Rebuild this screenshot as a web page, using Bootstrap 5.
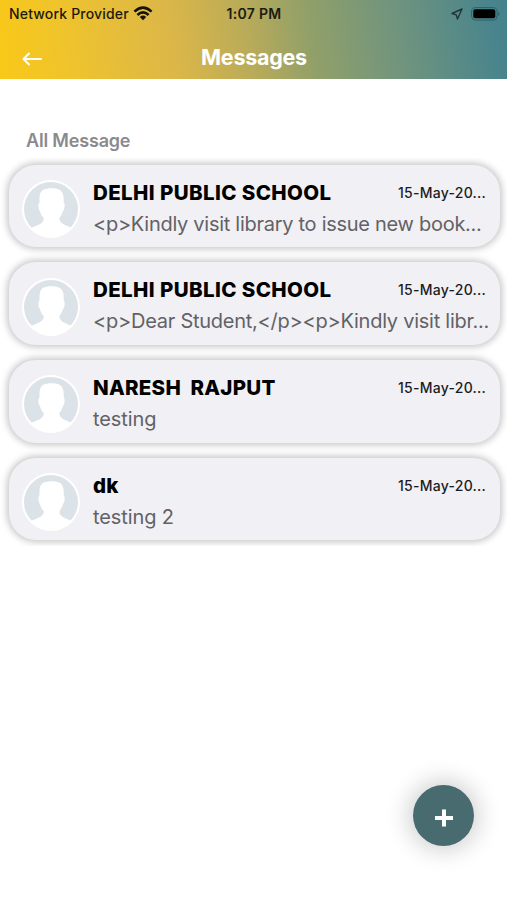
<!DOCTYPE html>
<html lang="en">
<head>
<meta charset="utf-8">
<meta name="viewport" content="width=device-width, initial-scale=1">
<title>Messages</title>
<link href="https://cdn.jsdelivr.net/npm/bootstrap@5.3.0/dist/css/bootstrap.min.css" rel="stylesheet">
<style>
body{font-family:Inter,"Liberation Sans",sans-serif;background:#fff;height:900px;overflow:hidden}
.app-top{height:78.5px;background:linear-gradient(81deg,#fac818 0%,#efc42c 13%,#dcb748 34%,#b9ab59 49%,#91a069 61%,#70947e 78%,#4a858c 96%,#44828f 100%)}
.status-row{height:27px;padding:0 7px 0 9px;font-size:14px;font-weight:500;color:#1c1a10;display:grid;grid-template-columns:1fr auto 1fr}
.provider{letter-spacing:.17px}
.clock{letter-spacing:.3px;font-weight:600;margin-left:-1px}
.title-row{height:51px;display:grid;grid-template-columns:1fr auto 1fr;color:#fff;padding:0 22px}
.title-row h1{font-size:21.5px;font-weight:700;letter-spacing:-.25px;padding:11px 0 0 1px}
.title-row svg{margin-top:12px}
.section-label{font-size:18px;font-weight:600;color:#8a8a8d;line-height:24px;margin:50.500px 0 5px 26px;letter-spacing:-.18px}
.thread-list{padding:6.5px 7px 6px 8.5px;gap:15px;overflow:hidden}
.thread{height:82.7px;border-radius:27px;background:#f1f0f5;box-shadow:0 0 7px 2px rgba(0,0,0,.23);padding:0 12px 0 13px}
.avatar{width:58px;height:58px;flex:none;margin-top:15.5px}
.thread-body{margin-left:13.5px;padding-top:13px;min-width:0}
.sender{font-size:20.5px;font-weight:800;color:#000;line-height:30px;white-space:pre;letter-spacing:.26px}
.s1{letter-spacing:.39px}
.stamp{font-size:14px;font-weight:500;color:#1c1c1e;width:90px;letter-spacing:.25px;line-height:30px;white-space:nowrap}
.preview{font-size:20px;color:#626266;line-height:33px;white-space:nowrap;letter-spacing:-.1px}
.p1{letter-spacing:-.28px}
.p2{letter-spacing:-.25px}
.compose{width:61px;height:61px;background:#486b6f;right:33px;bottom:54px;box-shadow:0 0 24px 4px rgba(0,0,0,.2);border:0}
</style>
</head>
<body>
<svg width="0" height="0" class="d-block" aria-hidden="true">
  <symbol id="person" viewBox="0 0 58 58">
    <circle cx="29" cy="29" r="29" fill="#fff"/>
    <circle cx="29" cy="29" r="27" fill="#dbe2e8"/>
    <path fill="#fff" d="M17.500 19C17.500 12 20 9.300 25 8.800C28 8 34 8.300 37.500 9.800C41.500 12 42 17 41.700 22.500C43.500 23.500 42.500 30 41 31C40 34.500 38.500 36.500 37.500 38C37.200 42 39.500 44 50 48C44 55.500 36.500 57.500 29 57.500S14 55.500 9 48C19.500 44 22 42 21.700 38C20.200 36.500 18.500 34.500 18 31C16.500 30 15.500 24 17.500 22.500Z"/>
  </symbol>
</svg>
<header class="app-top">
  <div class="status-row align-items-center">
    <div class="d-flex align-items-center">
      <span class="provider">Network Provider</span>
      <svg class="ms-1" width="20" height="15" viewBox="0 0 20 15" fill="none" stroke="#15130b" stroke-width="2.500"><path d="M1.400 5.600Q10-2.400 18.600 5.600M4.400 9Q10 3.700 15.600 9"/><path d="M10 14.300L6.800 11Q10 8.200 13.200 11Z" fill="#15130b" stroke="none"/></svg>
    </div>
    <span class="clock">1:07 PM</span>
    <div class="d-flex align-items-center justify-content-end gap-2">
      <svg width="12" height="12" viewBox="0 0 12 12" fill="none" stroke="#20373a" stroke-width="1.400" stroke-linejoin="round"><path d="M11 1L1 5.500L5.200 6.800L6.500 11Z"/></svg>
      <svg width="29" height="14" viewBox="0 0 29 14"><rect x=".6" y=".6" width="25.500" height="12.500" rx="4" fill="none" stroke="#315f67"/><rect x="2.300" y="2.300" width="22" height="9" rx="2" fill="#000"/><path d="M27.300 4.500Q30 6.800 27.300 9Z" fill="#315f67"/></svg>
    </div>
  </div>
  <div class="title-row align-items-center">
    <svg width="20" height="14" viewBox="0 0 20 14" fill="none" stroke="#fff" stroke-width="2" stroke-linecap="round" stroke-linejoin="round"><path d="M19 7H1.500M7 1.500L1.500 7L7 12.500"/></svg>
    <h1 class="mb-0">Messages</h1>
  </div>
</header>
<main>
  <h2 class="section-label">All Message</h2>
  <div class="thread-list d-flex flex-column">
    <article class="thread d-flex align-items-start">
      <svg class="avatar"><use href="#person"/></svg>
      <div class="thread-body flex-grow-1">
        <div class="d-flex justify-content-between"><div class="sender s1">DELHI PUBLIC SCHOOL</div><div class="stamp">15-May-20...</div></div>
        <div class="preview p1">&lt;p&gt;Kindly visit library to issue new book...</div>
      </div>
    </article>
    <article class="thread d-flex align-items-start">
      <svg class="avatar"><use href="#person"/></svg>
      <div class="thread-body flex-grow-1">
        <div class="d-flex justify-content-between"><div class="sender s1">DELHI PUBLIC SCHOOL</div><div class="stamp">15-May-20...</div></div>
        <div class="preview p2">&lt;p&gt;Dear Student,&lt;/p&gt;&lt;p&gt;Kindly visit libr...</div>
      </div>
    </article>
    <article class="thread d-flex align-items-start">
      <svg class="avatar"><use href="#person"/></svg>
      <div class="thread-body flex-grow-1">
        <div class="d-flex justify-content-between"><div class="sender">NARESH  RAJPUT</div><div class="stamp">15-May-20...</div></div>
        <div class="preview">testing</div>
      </div>
    </article>
    <article class="thread d-flex align-items-start">
      <svg class="avatar"><use href="#person"/></svg>
      <div class="thread-body flex-grow-1">
        <div class="d-flex justify-content-between"><div class="sender">dk</div><div class="stamp">15-May-20...</div></div>
        <div class="preview">testing 2</div>
      </div>
    </article>
  </div>
</main>
<button class="compose position-fixed rounded-circle p-0 d-flex align-items-center justify-content-center" aria-label="New message">
  <svg class="mt-1" width="18" height="18" viewBox="0 0 18 18" stroke="#fff" stroke-width="4"><path d="M9 .5V17.500M0 9H18"/></svg>
</button>
<script src="https://cdn.jsdelivr.net/npm/bootstrap@5.3.0/dist/js/bootstrap.bundle.min.js"></script>
</body>
</html>
